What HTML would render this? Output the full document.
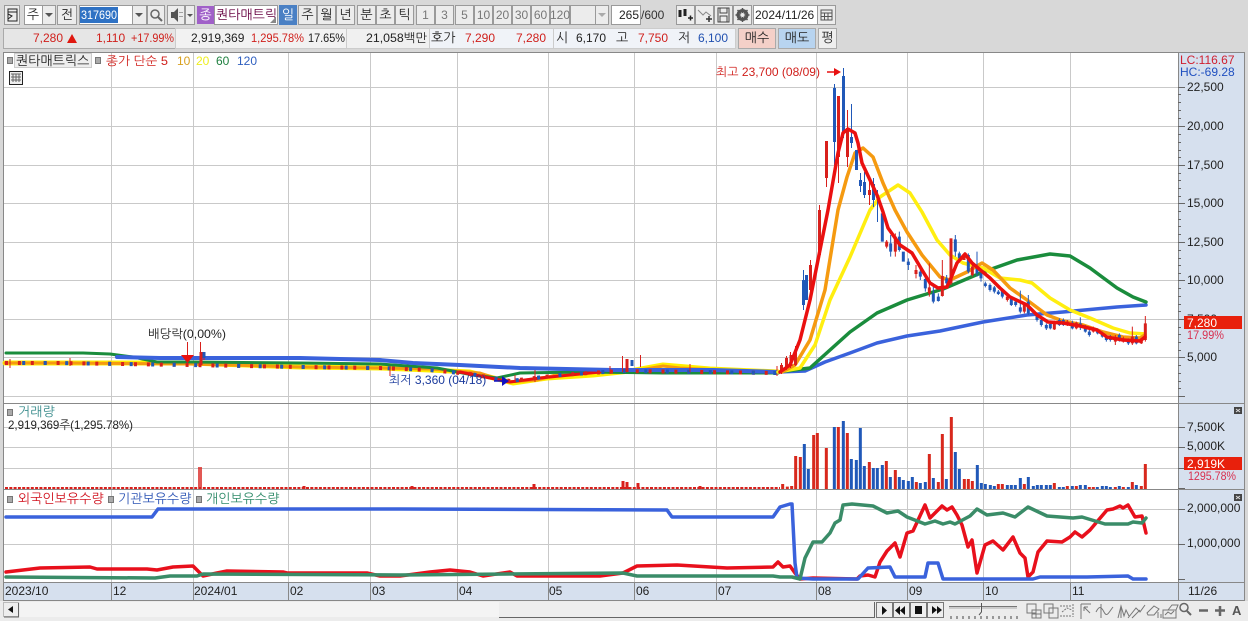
<!DOCTYPE html>
<html lang="ko"><head><meta charset="utf-8"><title>퀀타매트릭스 차트</title>
<style>
html,body{margin:0;padding:0;width:1248px;height:621px;overflow:hidden;background:#d8d8d8}
svg{display:block;font-family:"Liberation Sans","NanumGothic","Noto Sans CJK KR",sans-serif;font-size:12px}
.b{fill:#ececec;stroke:#9a9a9a}
.w{fill:#fff;stroke:#9a9a9a}
.g{stroke:#c9c9c9;stroke-width:1;fill:none}
.l{fill:none;stroke-linejoin:round;stroke-linecap:round}
text{fill:#222}
.k{font-size:13px}
.c{text-anchor:middle}
.r{fill:#d0201c}.u{fill:#2050b0}
.dg{fill:#888}
</style></head><body>
<svg width="1248" height="621" viewBox="0 0 1248 621" xmlns="http://www.w3.org/2000/svg">
<rect width="1248" height="621" fill="#d8d8d8"/>

<!-- toolbar row 1 -->
<rect class="b" x="4.500" y="5.500" width="15" height="19"/>
<path d="M8 9h9v12H8z M8 9v3h9 M8 14l4 2-4 3z" fill="none" stroke="#222"/>
<rect class="w" x="24.500" y="5.500" width="18" height="19"/><text class="c k" x="33" y="19">주</text>
<rect class="b" x="42.500" y="5.500" width="13" height="19"/><path d="M45 13h8l-4 4z" fill="#555"/>
<rect class="b" x="57.500" y="5.500" width="19" height="19"/><text class="c k" x="67" y="19">전</text>
<rect class="w" x="79.500" y="5.500" width="53" height="19"/>
<rect x="80" y="7" width="38" height="16" fill="#2f72c4"/><text x="81" y="19" style="fill:#fff" textLength="36" lengthAdjust="spacingAndGlyphs">317690</text>
<rect class="b" x="132.500" y="5.500" width="14" height="19"/><path d="M135 13h8l-4 4z" fill="#555"/>
<rect class="b" x="147.500" y="5.500" width="17" height="19"/><circle cx="155" cy="14" r="4" fill="none" stroke="#666" stroke-width="1.500"/><path d="M158 17l4 4" stroke="#666" stroke-width="2"/>
<rect class="b" x="167.500" y="5.500" width="17" height="19"/><path d="M171 12h3l4-4v14l-4-4h-3z" fill="#555"/><path d="M180 12v1M180 16v1M182 12v1M182 16v1" stroke="#555"/>
<rect class="b" x="185.500" y="5.500" width="9" height="19"/><path d="M187 14h6l-3 3z" fill="#555"/>
<rect x="197" y="6" width="17" height="18" fill="#a060c8"/><text class="c k" x="205.500" y="19" style="fill:#fff">종</text>
<rect class="w" x="214.500" y="5.500" width="63" height="19"/><text class="k" x="216" y="19" style="fill:#660040">퀀타매트릭</text>
<path d="M276 23l-6 0 6-6z" fill="#888"/>
<rect x="279" y="5" width="18" height="20" fill="#4a80c4"/><text class="c k" x="288" y="19" style="fill:#fff">일</text>
<rect class="b" x="298.500" y="5.500" width="18" height="19"/><text class="c k" x="307.500" y="19">주</text>
<rect class="b" x="317.500" y="5.500" width="18" height="19"/><text class="c k" x="326.500" y="19">월</text>
<rect class="b" x="336.500" y="5.500" width="18" height="19"/><text class="c k" x="345.500" y="19">년</text>
<rect class="b" x="357.500" y="5.500" width="18" height="19"/><text class="c k" x="366.500" y="19">분</text>
<rect class="b" x="376.500" y="5.500" width="18" height="19"/><text class="c k" x="385.500" y="19">초</text>
<rect class="b" x="395.500" y="5.500" width="18" height="19"/><text class="c k" x="404.500" y="19">틱</text>
<g>
<rect class="b" x="416.500" y="5.500" width="18" height="19"/><text class="c" x="425.500" y="19" style="fill:#777">1</text>
<rect class="b" x="435.500" y="5.500" width="18" height="19"/><text class="c" x="444.500" y="19" style="fill:#777">3</text>
<rect class="b" x="455.500" y="5.500" width="18" height="19"/><text class="c" x="464.500" y="19" style="fill:#777">5</text>
<rect class="b" x="474.500" y="5.500" width="18" height="19"/><text class="c" x="483.500" y="19" style="fill:#777">10</text>
<rect class="b" x="493.500" y="5.500" width="18" height="19"/><text class="c" x="502.500" y="19" style="fill:#777">20</text>
<rect class="b" x="512.500" y="5.500" width="18" height="19"/><text class="c" x="521.500" y="19" style="fill:#777">30</text>
<rect class="b" x="531.500" y="5.500" width="18" height="19"/><text class="c" x="540.500" y="19" style="fill:#777">60</text>
<rect class="b" x="550.500" y="5.500" width="19" height="19"/><text class="c" x="560" y="19" style="fill:#777">120</text>
</g>
<rect class="b" x="570.500" y="5.500" width="25" height="19"/>
<rect class="b" x="595.500" y="5.500" width="13" height="19"/><path d="M598 13h8l-4 4z" fill="#aaa"/>
<rect class="w" x="611.500" y="5.500" width="29" height="19"/><text x="619" y="19">265</text>
<text x="641" y="19" style="fill:#333">/600</text>
<rect class="b" x="676.500" y="5.500" width="18" height="19"/><path d="M680 10v7M685 9v7M680 12v3" stroke="#222" stroke-width="3"/><path d="M688 18h5M690.500 15.500v5" stroke="#222" stroke-width="1.500"/>
<rect class="b" x="695.500" y="5.500" width="18" height="19"/><path d="M698 10l5 5 3-3 5 4" fill="none" stroke="#888"/><path d="M706 19h6M709 16v6" stroke="#333" stroke-width="1.500"/>
<rect class="b" x="714.500" y="5.500" width="18" height="19"/><path d="M718 8h11v14h-11zM720 8v5h7V8M720 22v-6h7v6" fill="none" stroke="#444"/>
<rect class="b" x="733.500" y="5.500" width="18" height="19"/><circle cx="742.500" cy="15" r="4.500" fill="none" stroke="#555" stroke-width="3"/><path d="M742.500 8v14M735.500 15h14M737.500 10l10 10M747.500 10l-10 10" stroke="#555" stroke-width="1.500"/><circle cx="742.500" cy="15" r="2" fill="#ececec"/>
<rect class="w" x="753.500" y="5.500" width="64" height="19"/><text x="755" y="19">2024/11/26</text>
<rect class="b" x="817.500" y="5.500" width="18" height="19"/><path d="M821 10h11v10h-11zM821 13h11M824.500 13v7M828 13v7M821 16.500h11" fill="none" stroke="#555"/>

<!-- toolbar row 2 -->
<rect x="3.500" y="28.500" width="172" height="20" fill="#e6e6e6" stroke="#aaa"/>
<rect x="175.500" y="28.500" width="171" height="20" fill="#f2f2f2" stroke="#ccc"/>
<rect x="346.500" y="28.500" width="83" height="20" fill="#f0f0f0" stroke="#ccc"/>
<rect x="429.500" y="28.500" width="124" height="20" fill="#f0f3f8" stroke="#ccc"/>
<rect x="553.500" y="28.500" width="182" height="20" fill="#f0f3f8" stroke="#ccc"/>
<text class="r" x="33" y="42">7,280</text><path d="M67 43l5-9 5 9z" fill="#e01810"/>
<text class="r" x="96" y="42">1,110</text><text class="r" x="131" y="42" textLength="43" lengthAdjust="spacingAndGlyphs">+17.99%</text>
<text x="191" y="42">2,919,369</text><text class="r" x="251" y="42" textLength="53" lengthAdjust="spacingAndGlyphs">1,295.78%</text><text x="308" y="42" textLength="37" lengthAdjust="spacingAndGlyphs">17.65%</text>
<text x="366" y="42" textLength="61" lengthAdjust="spacingAndGlyphs">21,058백만</text>
<text class="k" x="431" y="42">호가</text><text class="r" x="465" y="42">7,290</text><text class="r" x="516" y="42">7,280</text>
<text class="k" x="556" y="42">시</text><text x="576" y="42">6,170</text><text class="k" x="616" y="42">고</text><text class="r" x="638" y="42">7,750</text><text class="k" x="678" y="42">저</text><text class="u" x="698" y="42">6,100</text>
<rect x="738.500" y="28.500" width="37" height="20" fill="#f4d0c8" stroke="#aaa"/><text class="c k" x="757" y="42">매수</text>
<rect x="778.500" y="28.500" width="37" height="20" fill="#b8d4f0" stroke="#aaa"/><text class="c k" x="797" y="42">매도</text>
<rect x="818.500" y="28.500" width="18" height="20" fill="#eee" stroke="#aaa"/><text class="c k" x="827.500" y="42">평</text>

<!-- chart panes -->
<rect x="3" y="52" width="1175" height="530" fill="#fff"/>
<rect x="1178" y="52" width="66" height="548" fill="#d6e0ee"/>
<path class="g" d="M111.500 52V582M193.500 52V582M288.500 52V582M370.500 52V582M457.500 52V582M548.500 52V582M634.500 52V582M716.500 52V582M816.500 52V582M907.500 52V582M983.500 52V582M1070.500 52V582"/>
<path class="g" d="M3 87.500H1178M3 126.500H1178M3 165.500H1178M3 203.500H1178M3 242.500H1178M3 280.500H1178M3 319.500H1178M3 357.500H1178M3 396.500H1178M3 427.500H1178M3 447.500H1178M3 468.500H1178M3 509.500H1178M3 544.500H1178"/>
<path d="M3 52.500H1244M3.500 52V600M1178.500 52V600M1244.500 52V600M3 403.500H1244M3 489.500H1244M3 582.500H1244M3 600.500H1244" stroke="#888" fill="none"/>

<!-- main left candles + MAs -->
<path class="l" stroke="#ffee00" stroke-width="5" stroke-linecap="butt" d="M5 363H190L300 367 380 368 430 370 470 372 513 383 547 378 593 375 630 371 663 365 710 369 778 372"/>
<path class="l" stroke="#f59a10" stroke-width="3" d="M5 363H60L190 364 300 367 380 368 430 369 480 373 507 382 537 380 563 373 640 370 663 366 680 368 778 373"/>
<path class="l" stroke="#1a8c3c" stroke-width="3" d="M6 353H83L110 354 133 357 157 362 193 362 300 363 380 364 437 368 473 375 497 378 520 373 580 372 663 373 778 373"/>
<path class="l" stroke="#ea1010" stroke-width="3" d="M460 372L490 378 510 382 540 378 600 372"/>
<path class="l" stroke="#3a62dc" stroke-width="4" d="M117 357L160 358H300L380 360 413 363 460 365 520 368 613 370 713 370 777 372"/>
<path fill="none" stroke="#d8201c" stroke-width="4" stroke-dasharray="3 9.900" d="M5 363L60 363 120 364 190 365 300 367 380 368 430 370 470 374 510 381 560 375 620 371 700 372 777 373"/>
<path fill="none" stroke="#2058b8" stroke-width="4" stroke-dasharray="3 18.500" stroke-dashoffset="4.300" d="M5 363L60 363 120 364 190 365 300 367 380 368 430 370 470 374 510 381 560 375 620 371 700 372 777 373"/>
<path d="M10 359v9M70 358v8M204 352v8M390 366v10M515 375v8M535 370v12M777 366v10M610 366v8M690 364v8" stroke="#d8201c"/>
<path d="M200.500 342V366M622.500 356V372M640.500 355V367M187.500 342V358" stroke="#d8201c"/>
<path d="M201 352v13M627 359v13" stroke="#d8201c" stroke-width="3"/><path d="M632 360v6M204 352v6" stroke="#2058b8" stroke-width="3"/>
<path d="M181 355h13l-6.500 8z" fill="#e81010"/>
<text x="148" y="338" textLength="78" lengthAdjust="spacingAndGlyphs">배당락(0,00%)</text>
<text x="389" y="384" style="fill:#1a3a9c">최저 3,360 (04/18)</text>
<path d="M494 381h8" stroke="#1010c0" stroke-width="1.500"/><path d="M502 376l7 5-7 5z" fill="#1010c0"/>
<text x="716" y="76" class="r">최고 23,700 (08/09)</text>
<path d="M827 72h8" stroke="#e81010" stroke-width="1.500"/><path d="M834 68l7 4-7 4z" fill="#e81010"/>

<!-- MAs right -->
<path class="l" stroke="#3a62dc" stroke-width="3.500" d="M778 372L805 371 825 362 850 353 877 343 907 336 940 331 983 322 1027 315 1063 312 1117 307 1146 305"/>
<path class="l" stroke="#1a8c3c" stroke-width="3.500" d="M778 372L810 368 830 350 850 332 877 313 907 300 943 289 983 272 1017 260 1050 254 1070 256 1090 268 1117 288 1133 297 1146 302"/>
<path class="l" stroke="#ffee10" stroke-width="3.500" d="M778 372L800 368 815 345 830 300 850 257 870 210 880 197 898 185 910 193 922 212 937 240 950 255 963 263 983 268 1000 278 1020 280 1032 283 1050 298 1070 310 1090 318 1113 328 1130 333 1145 334"/>
<path class="l" stroke="#f59a10" stroke-width="3.500" d="M782 372L795 365 810 340 825 290 838 210 847 177 855 153 863 148 873 157 883 183 895 210 907 232 922 255 940 277 950 280 967 272 982 263 993 270 1010 288 1027 300 1047 315 1063 321 1083 325 1103 332 1123 337 1140 338 1145 335"/>

<!-- candles right: real px -->
<g stroke="#d8201c"><path d="M781.500 363V374M786.500 356V370M790.500 352V368M795.500 346V366M810.500 260V292M819.500 205V258M826.500 141V187M838.500 96V183M847.500 110V167M869.500 177V205"/>
<path stroke-width="3" d="M781.500 365V372M786.500 358V368M791 355V366M795.500 350V365M810.500 265V290M819.500 210V255M826.500 141V178M838.500 96V157M847.500 128V157M869.500 190V195"/></g>
<g stroke="#2058b8"><path d="M803.500 270V310M834.500 84V165M843.500 68V138M851.500 104V148M860.500 173V192M864.500 172V198M873.500 178V207M877.500 190V222"/>
<path stroke-width="3" d="M803.500 280V305M806.500 275V300M834.500 88V142M843.500 76V132M851.500 137V143M856.500 150V170M860.500 180V186M864.500 182V195M873.500 184V200"/></g>
<g transform="translate(850 200) scale(.33333)" fill="none">
<path stroke="#2058b8" stroke-width="3" d="M97 20V125M122 105V170M148 95V155M175 175V210M211 200V240M226 230V275M250 250V310M265 280V305M290 225V255M316 105V170M328 155V180M355 160V220M381 155V230M393 215V245M406 245V262M420 250V275M433 258V280M445 270V285M457 265V295M484 292V318M497 300V320M511 272V340M535 285V345M561 340V365M574 355V380M589 370V390M601 365V388M628 355V378M640 355V378M667 362V388M691 352V390M706 375V398M718 390V410M743 385V403M757 395V413M769 405V425M781 405V425M808 400V425M835 415V435M859 405V433"/>
<path stroke="#d8201c" stroke-width="3" d="M110 120V145M136 100V170M198 195V235M238 190V290M277 180V290M303 115V255M367 195V230M472 285V305M523 310V340M613 362V390M652 360V378M679 365V388M730 380V398M796 405V435M820 410V428M847 380V435M874 415V432M886 348V425"/>
<path stroke="#2058b8" stroke-width="9" d="M97 40V125M122 130V155M148 110V150M160 155V185M175 185V195M211 215V230M226 237V265M250 280V305M265 290V303M290 235V250M316 118V155M328 160V175M355 165V215M381 205V220M393 220V235M406 250V258M420 255V270M433 262V275M445 275V282M457 268V290M484 297V315M497 305V315M511 322V335M535 305V340M561 345V360M574 360V375M589 375V385M601 372V385M628 360V375M640 360V375M667 368V385M691 370V382M706 380V395M718 395V405M743 390V400M757 400V410M769 410V420M781 410V420M808 405V420M835 420V430M859 410V430"/>
<path stroke="#d8201c" stroke-width="9" d="M110 125V140M136 110V155M198 210V222M238 262V280M277 228V288M303 115V250M342 165V180M367 200V225M472 290V300M523 315V335M613 365V388M652 365V375M679 368V385M730 385V395M796 415V425M820 415V425M847 410V430M874 420V430M886 370V420"/>
</g>
<path class="l" stroke="#ea1010" stroke-width="3.500" d="M780 372L790 365 800 340 810 300 820 250 828 210 832 187 838 153 843 133 848 129 855 133 858 143 862 163 870 180 877 195 883 212 888 228 893 235 900 245 912 253 922 270 930 283 938 288 947 287 951 278 957 263 965 254 972 263 978 268 990 278 1000 288 1010 297 1027 305 1037 315 1048 322 1063 323 1080 326 1097 330 1107 337 1123 340 1140 341 1145 337"/>

<!-- top-left legend -->
<rect x="7.500" y="57.500" width="5" height="6" fill="#aaa" stroke="#777"/>
<rect x="14.500" y="53.500" width="77" height="14" fill="#eee" stroke="#ccc"/><text class="k" x="16" y="65">퀀타매트릭스</text>
<rect x="95.500" y="57.500" width="5" height="6" fill="#aaa" stroke="#777"/>
<text class="r" x="106" y="65" textLength="62" lengthAdjust="spacingAndGlyphs">종가 단순 5</text><text x="177" y="65" style="fill:#d8a020">10</text><text x="196" y="65" style="fill:#eeee20">20</text><text x="216" y="65" style="fill:#208040">60</text><text x="237" y="65" style="fill:#3060c0">120</text>
<rect x="9.500" y="71.500" width="13" height="13" fill="#eee" stroke="#222"/><path d="M11 74h10M11 77h10M11 80h10M13 74v8M16 74v8M19 74v8" stroke="#666" fill="none"/>

<!-- right axis -->
<text x="1180" y="64" style="fill:#d02030">LC:116.67</text>
<text x="1180" y="76" style="fill:#2050c0">HC:-69.28</text>
<g style="fill:#333"><text x="1187" y="91">22,500</text><text x="1187" y="130">20,000</text><text x="1187" y="169">17,500</text><text x="1187" y="207">15,000</text><text x="1187" y="246">12,500</text><text x="1187" y="284">10,000</text><text x="1187" y="323">7,500</text><text x="1187" y="361">5,000</text></g>
<path d="M1178 87.500h7M1178 126.500h7M1178 165.500h7M1178 203.500h7M1178 242.500h7M1178 280.500h7M1178 319.500h7M1178 357.500h7M1178 396.500h7M1178 94.500h3M1178 102.500h3M1178 110.500h3M1178 118.500h3M1178 134.500h3M1178 142.500h3M1178 150.500h3M1178 157.500h3M1178 173.500h3M1178 180.500h3M1178 188.500h3M1178 196.500h3M1178 211.500h3M1178 219.500h3M1178 226.500h3M1178 234.500h3M1178 250.500h3M1178 258.500h3M1178 265.500h3M1178 273.500h3M1178 288.500h3M1178 296.500h3M1178 304.500h3M1178 311.500h3M1178 327.500h3M1178 334.500h3M1178 342.500h3M1178 350.500h3M1178 365.500h3M1178 373.500h3M1178 381.500h3M1178 388.500h3" stroke="#666" fill="none"/>
<rect x="1184" y="316" width="58" height="13" fill="#e8200c"/><text x="1187" y="327" style="fill:#fff">7,280</text>
<text x="1187" y="339" style="fill:#d83050" textLength="37" lengthAdjust="spacingAndGlyphs">17.99%</text>

<!-- volume pane -->
<rect x="7.500" y="409.500" width="5" height="6" fill="#aaa" stroke="#777"/>
<text class="k" x="18" y="416" style="fill:#3a8c8c">거래량</text>
<text x="8" y="429" textLength="125" lengthAdjust="spacingAndGlyphs">2,919,369주(1,295.78%)</text>
<path d="M5 488H780" stroke="#d8201c" stroke-width="2" stroke-dasharray="3 1.300"/>
<path d="M199 467V489M201 467V489" stroke="#d8201c" stroke-width="1.500"/>
<path d="M623 481V489M627 482V489M638 483V489M534 484V489M304 486V489M412 486V489M700 486V489" stroke="#d8201c" stroke-width="3"/>
<g transform="translate(780 400) scale(.33333)" fill="none" stroke-width="9">
<path stroke="#d8281c" d="M8 252V267M22 260V267M35 258V267M47 168V267M61 171V267M101 105V267M112 99V267M139 144V267M175 81V267M202 99V267M268 186V267M319 183V267M346 210V267M409 246V267M448 162V267M475 246V267M487 102V267M514 51V267M553 237V267M565 237V267M577 243V267M655 252V267M667 252V267M733 252V267M823 249V267M862 258V267M889 258V267M928 261V267M940 261V267M1006 261V267M1030 261V267M1057 246V267M1084 258V267M1096 192V267"/>
<path stroke="#2058b8" d="M73 132V267M85 207V267M163 81V267M190 63V267M214 177V267M229 180V267M241 84V267M253 198V267M280 204V267M292 204V267M307 195V267M331 231V267M358 231V267M370 240V267M385 243V267M397 231V267M421 249V267M436 246V267M460 234V267M499 237V267M526 156V267M538 207V267M592 195V267M604 249V267M616 252V267M631 255V267M643 258V267M682 255V267M694 255V267M706 255V267M721 234V267M745 231V267M760 258V267M772 255V267M784 255V267M799 255V267M811 255V267M838 261V267M850 261V267M877 258V267M901 255V267M916 255V267M952 261V267M967 258V267M979 258V267M991 261V267M1018 258V267M1045 261V267M1069 255V267"/>
</g>
<rect x="1234" y="407" width="8" height="7" fill="#444"/><path d="M1236 409l4 3M1240 409l-4 3" stroke="#ddd"/>
<g style="fill:#333"><text x="1187" y="431">7,500K</text><text x="1187" y="450">5,000K</text></g>
<path d="M1178 427.500h7M1178 447.500h7M1178 468.500h7M1178 488.500h7" stroke="#666"/>
<rect x="1184" y="457" width="58" height="13" fill="#e8200c"/><text x="1187" y="468" style="fill:#fff">2,919K</text>
<text x="1188" y="480" style="fill:#d83050" textLength="48" lengthAdjust="spacingAndGlyphs">1295.78%</text>

<!-- holdings pane -->
<rect x="7.500" y="496.500" width="5" height="6" fill="#aaa" stroke="#777"/>
<text class="k" x="18" y="503" style="fill:#d0101c">외국인보유수량</text>
<rect x="108.500" y="496.500" width="5" height="6" fill="#aaa" stroke="#777"/>
<text class="k" x="118" y="503" style="fill:#2c54b4">기관보유수량</text>
<rect x="196.500" y="496.500" width="5" height="6" fill="#aaa" stroke="#777"/>
<text class="k" x="206" y="503" style="fill:#2e8a68">개인보유수량</text>
<path class="l" stroke="#e8101c" stroke-width="3.500" d="M6 572L40 568 90 567 97 569 147 569 157 570 173 567 193 566 203 576 217 573 227 571 283 572 287 573 367 573 380 576 400 576 430 572 450 570 470 572 483 576 510 572 517 576 600 576 623 573 637 566 677 565 727 568 773 567 778 562 783 567 790 566 795 573 800 579 813 578 857 579 860 576 868 575 875 577 880 562 887 551 895 543 900 557 907 533 913 531 925 505 930 518 942 506 947 510 952 507 957 515 962 525 968 547 972 540 977 573 985 545 993 541 1003 550 1013 537 1020 553 1025 558 1028 577 1033 572 1038 552 1047 541 1062 542 1070 537 1075 532 1082 537 1090 530 1107 510 1113 509 1120 506 1123 508 1128 505 1135 517 1142 516 1146 533"/>
<path class="l" stroke="#3a62dc" stroke-width="3.500" d="M6 517H152L158 509H400L667 510 672 517H773L780 507 790 504 792 504 795 563 797 578 813 579H858L868 568 890 567 895 577H925L928 563H938L943 579H1033L1040 577 1087 577 1128 576 1133 579H1146"/>
<path class="l" stroke="#3a8c68" stroke-width="3.500" d="M6 577L155 578 170 576 197 576 203 574 400 575 623 573 637 576 773 576 780 577 792 577 800 579 805 558 813 542 822 542 830 533 835 523 840 520 843 505 852 504 873 506 887 513 898 511 907 517 925 524 935 521 943 524 950 522 955 524 970 516 977 509 987 515 1003 513 1015 517 1028 507 1047 516 1073 518 1082 517 1105 524 1128 524 1133 522 1142 523 1146 518"/>
<rect x="1234" y="494" width="8" height="7" fill="#444"/><path d="M1236 496l4 3M1240 496l-4 3" stroke="#ddd"/>
<g style="fill:#333"><text x="1187" y="512">2,000,000</text><text x="1187" y="547">1,000,000</text></g>
<path d="M1178 509.500h7M1178 544.500h7M1178 579.500h7" stroke="#666"/>

<!-- date axis -->
<rect x="3.500" y="582.500" width="1241" height="18" fill="#d6e0ee" stroke="#888"/>
<path d="M111.500 582V600M193.500 582V600M288.500 582V600M370.500 582V600M457.500 582V600M548.500 582V600M634.500 582V600M716.500 582V600M816.500 582V600M907.500 582V600M983.500 582V600M1070.500 582V600M1178.500 582V600" stroke="#888"/>
<g style="fill:#333"><text x="5" y="595">2023/10</text><text x="113" y="595">12</text><text x="194" y="595">2024/01</text><text x="290" y="595">02</text><text x="372" y="595">03</text><text x="459" y="595">04</text><text x="549" y="595">05</text><text x="636" y="595">06</text><text x="718" y="595">07</text><text x="818" y="595">08</text><text x="909" y="595">09</text><text x="985" y="595">10</text><text x="1072" y="595">11</text><text x="1188" y="595">11/26</text></g>

<!-- bottom toolbar -->
<rect x="0" y="601" width="1248" height="20" fill="#ececec"/>
<rect x="20" y="602" width="479" height="15" fill="#f4f4f4"/>
<rect x="3.500" y="602.500" width="15" height="14" fill="#eee" stroke="#bbb"/><path d="M18.500 603v14H4" stroke="#666" fill="none"/><path d="M13 606v7l-5-3.500z" fill="#111"/>
<rect x="499" y="602" width="375" height="15" fill="#eee"/><path d="M499 617.500H875M874.500 602V618" stroke="#666"/>
<g fill="#eee" stroke="#777"><rect x="876.500" y="602.500" width="16" height="15"/><rect x="893.500" y="602.500" width="16" height="15"/><rect x="910.500" y="602.500" width="16" height="15"/><rect x="927.500" y="602.500" width="16" height="15"/></g>
<path d="M882 606l5 4.500-5 4.500zM905 606v9l-5-4.500zM900 606v9l-5-4.500zM915 606h7v8h-7zM932 606l5 4-5 4zM937 606l5 4-5 4z" fill="#111"/>
<path d="M949 606.500H1017" stroke="#777"/><path d="M949 608H980M982 608H1017" stroke="#aaa"/><path d="M981.500 603V612L979 615" stroke="#555" fill="none"/>
<path d="M951 616v3M957 616v3M963 616v3M969 616v3M975 616v3M981 616v3M987 616v3M993 616v3M999 616v3M1005 616v3M1011 616v3M1017 616v3" stroke="#444"/>
<g fill="none" stroke="#777">
<path d="M1027 604h9v9h-9zM1032 610h9v8h-9zM1032 614h9M1036 610v8"/>
<path d="M1044 604h9v9h-9zM1049 608h9v10h-9z"/>
<path d="M1060 606h11M1073 604v13M1060 616h12M1062 612l5-4 5 2" stroke-dasharray="2 1"/>
<path d="M1081 604h10M1081 604v15M1084 607l6 6M1084 607h4M1084 607v4"/>
<path d="M1096 612c3-6 5-6 8 0s5 0 9-5M1101 604v14"/>
<path d="M1118 618l3-12 3 10 2-6 3 6M1121 606v12"/>
<path d="M1128 618l8-10 4 4 5-7M1132 618l8-8"/>
<path d="M1147 613l7-7 5 3-5 6h-6zM1158 612v6M1161 614v4"/>
<path d="M1163 610h13v8h-13zM1165 615l3-3 3 2 3-3M1168 610l4-5h6l-2 5"/>
</g>
<circle cx="1184" cy="607.500" r="4" fill="none" stroke="#666" stroke-width="1.500"/><path d="M1187 611l4 4" stroke="#666" stroke-width="2"/>
<path d="M1199 610.500h9" stroke="#666" stroke-width="2.500"/>
<path d="M1215 610.500h10M1220 606v10" stroke="#666" stroke-width="2.500"/>
<text x="1232" y="615" style="fill:#555;font-weight:bold;font-size:13px">A</text>
</svg>
</body></html>
